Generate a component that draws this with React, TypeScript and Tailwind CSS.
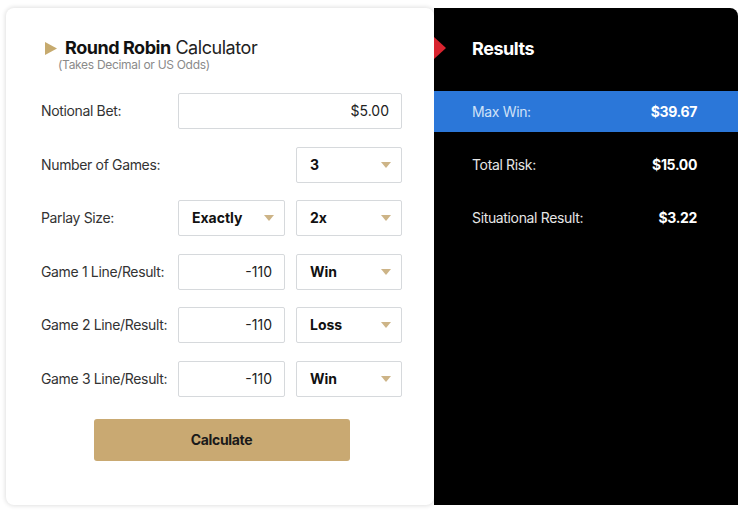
import React from "react";

const font = { fontFamily: "Inter, 'Noto Sans', sans-serif" };

function Caret() {
  return (
    <svg width="10" height="6" viewBox="0 0 10 6" className="shrink-0">
      <path d="M0 0 L10 0 L5 6 Z" fill="#cdb487" />
    </svg>
  );
}

function Select({ value, wide }: { value: string; wide?: boolean }) {
  return (
    <div
      className={`flex h-9 items-center justify-between rounded-[2px] border border-[#d6d9dc] bg-white pl-[13px] pr-[10px] text-sm font-bold text-[#111] ${
        wide ? "w-[107px]" : "w-[106px]"
      }`}
    >
      <span>{value}</span>
      <Caret />
    </div>
  );
}

function TextBox({ value, full }: { value: string; full?: boolean }) {
  return (
    <div
      className={`flex h-9 items-center justify-end rounded-[2px] border border-[#d6d9dc] bg-white pr-3 text-sm text-[#222] ${
        full ? "w-[224px]" : "w-[107px]"
      }`}
    >
      {value}
    </div>
  );
}

function Row({ label, children }: { label: string; children: React.ReactNode }) {
  return (
    <div className="flex items-center">
      <div className="w-[137px] text-sm tracking-tight text-[#333]">{label}</div>
      <div className="flex flex-1 justify-end gap-[11px]">{children}</div>
    </div>
  );
}

const games = [
  { n: 1, result: "Win" },
  { n: 2, result: "Loss" },
  { n: 3, result: "Win" },
];

export default function App() {
  return (
    <div className="h-[511px] w-[740px] overflow-hidden bg-white" style={font}>
      <div className="flex pl-[6px] pt-2">
        <div className="h-[497px] w-[428px] rounded-lg bg-white pl-[35px] pr-[32px] pt-[29px] shadow-[0_0_4px_1px_rgba(0,0,0,0.12)]">
          <div className="flex items-center pl-1">
            <svg width="12" height="13" viewBox="0 0 12 13" className="mr-2">
              <path d="M0 0 L12 6.5 L0 13 Z" fill="#c6aa6e" />
            </svg>
            <h1 className="text-[18px] leading-[22px] tracking-tight text-[#111]">
              <span className="font-bold">Round Robin</span>{" "}
              <span className="text-[#222]">Calculator</span>
            </h1>
          </div>
          <p className="pl-[17px] text-[12px] leading-[12px] tracking-tight text-[#8a8a8a]">
            (Takes Decimal or US Odds)
          </p>

          <div className="mt-[22px] flex flex-col gap-[17.5px]">
            <Row label="Notional Bet:">
              <TextBox value="$5.00" full />
            </Row>
            <Row label="Number of Games:">
              <Select value="3" />
            </Row>
            <Row label="Parlay Size:">
              <Select value="Exactly" wide />
              <Select value="2x" />
            </Row>
            {games.map((g) => (
              <Row key={g.n} label={`Game ${g.n} Line/Result:`}>
                <TextBox value="-110" />
                <Select value={g.result} />
              </Row>
            ))}
          </div>

          <div className="mt-[22px] flex justify-center">
            <button className="h-[42px] w-[256px] rounded-[3px] bg-[#c9a972] text-sm font-bold tracking-tight text-[#1a1a1a]">
              Calculate
            </button>
          </div>
        </div>

        <div className="mr-[2px] h-[497px] flex-1 rounded-tr-lg bg-black pt-7">
          <div className="flex h-[24px] items-center">
            <svg width="12" height="22" viewBox="0 0 12 22">
              <path d="M0 0 L12 11 L0 22 Z" fill="#d8242f" />
            </svg>
            <span className="ml-[26px] text-[18px] font-bold tracking-tight text-white">Results</span>
          </div>
          <div className="mt-[31px] flex h-[41px] items-center justify-between bg-[#2b77d9] pl-[38px] pr-[41px] text-sm tracking-tight">
            <span className="text-[#cfe1f7]">Max Win:</span>
            <span className="font-bold text-white">$39.67</span>
          </div>
          <div className="mt-3 flex h-[41px] items-center justify-between pl-[38px] pr-[41px] text-sm tracking-tight">
            <span className="text-[#e6e6e6]">Total Risk:</span>
            <span className="font-bold text-white">$15.00</span>
          </div>
          <div className="mt-3 flex h-[41px] items-center justify-between pl-[38px] pr-[41px] text-sm tracking-tight">
            <span className="text-[#e6e6e6]">Situational Result:</span>
            <span className="font-bold text-white">$3.22</span>
          </div>
        </div>
      </div>
    </div>
  );
}
